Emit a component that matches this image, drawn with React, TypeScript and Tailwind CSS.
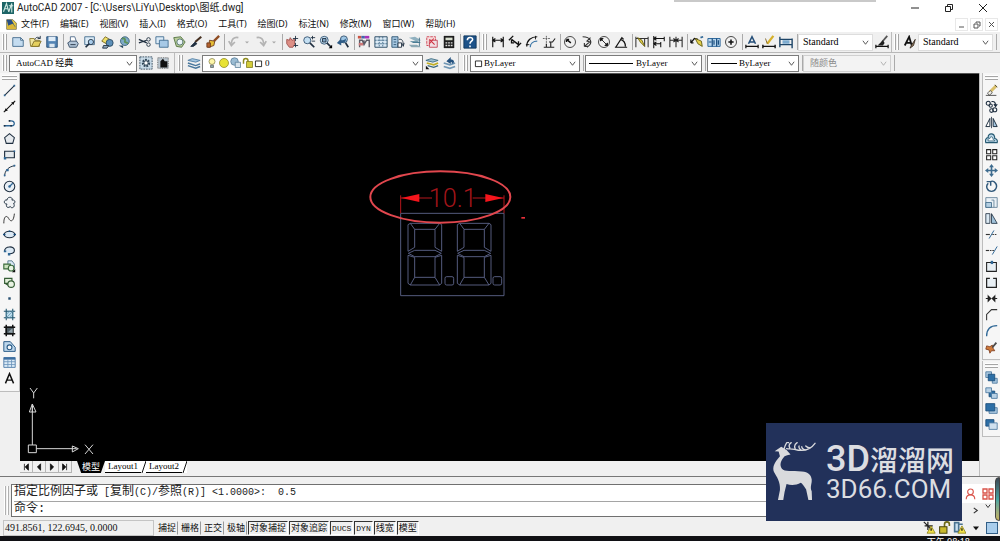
import type { ReactNode } from 'react'

const INK = '#1f2f40'
const BLUE = '#2f6796'
const PALE = '#c9dff0'
const GOLD = '#e3d04a'

// All glyphs are drawn on a 16 x 16 grid
const glyphs: Record<string, ReactNode> = {
  new: <path d="M2 3h9l3 3v7H2z M11 3v3h3" fill="#c4dcf0" stroke="#41698c" />,
  open: <><path d="M2 4h5l1 2h5v7H3z" fill="#f1e6a0" stroke="#8c7a2d" /><path d="M4 13l3-6h8l-3 6z" fill="#e6d05e" stroke="#7a6a24" /><path d="M8 5c1-3 4-3 6-1M14 1v3h-3" stroke={INK} /></>,
  save: <><path d="M2 2h12v12H2z" fill="#5384b4" stroke="#234a72" /><path d="M4 2h8v5H4z" fill="#e0edf8" /><path d="M5 10h6v4H5z" fill="#dce7f0" /></>,
  print: <><path d="M5 8V2h5l2 6" fill="#fff" stroke="#4d6888" /><path d="M2 9l3-2h7l2 3-2 4H4z" fill="#b2c5d8" stroke="#31475f" /><path d="M5 11h6" stroke={INK} /></>,
  preview: <><path d="M2 2h11v9H2z" fill="#dcecf8" stroke="#41698c" /><circle cx="9" cy="8" r="3" fill="#a8cceb" stroke={INK} /><path d="M7 10l-4 4" stroke={INK} strokeWidth="2" /></>,
  publish: <><path d="M2 7l4-5 5 3-2 6z" fill="#f0e06a" stroke="#77671e" /><circle cx="11" cy="9" r="4" fill="#5d8fb8" stroke="#27475e" /><path d="M4 12h6l-2 3H3z" fill="#92a9bd" stroke={INK} /></>,
  globe: <><circle cx="9" cy="7" r="5" fill="#7da9c6" stroke="#37607a" /><path d="M6 5c2-3 4 0 3 2s3 1 3 3" stroke="#5c9256" strokeWidth="2" /><path d="M2 12h5v3z" fill="#27475e" /></>,
  cut: <><path d="M1 5l9 4M1 9l9-3" stroke={INK} strokeWidth="1.5" /><circle cx="12" cy="11" r="2" stroke={INK} /><circle cx="12" cy="5" r="2" stroke={INK} /></>,
  copy: <><path d="M1 2h9v8H1z" fill="#dcebf7" stroke="#406d91" /><path d="M5 6h10v8H5z" fill="#a7c9e6" stroke="#406d91" /></>,
  paste: <><path d="M2 3l8-1 5 6-4 6-6-1z" fill="#b9cc9a" stroke="#4e6f3c" /><circle cx="9" cy="8" r="3.5" fill="#eaf3f8" stroke="#4e6f6c" /></>,
  brush: <><path d="M14 2L7 8" stroke="#463021" strokeWidth="2.4" /><path d="M7 8l-5 5 3 0 4-3z" fill={INK} stroke={INK} /></>,
  block: <><path d="M15 1L9 7" stroke="#8f4c22" strokeWidth="2.6" /><path d="M4 6l6 1-1 5-6 2z" fill="#e5bd35" stroke="#6c3a1e" /><path d="M1 9h4v5H1z" fill="#b5622e" stroke="#6c3a1e" /></>,
  undo: <path d="M13 3C8 2 5 5 5 10M2 7l3 5 4-4" stroke="#b3b3b3" strokeWidth="2" />,
  redo: <path d="M3 3c5-1 8 2 8 7M14 7l-3 5-4-4" stroke="#b3b3b3" strokeWidth="2" />,
  caret: <path d="M4 7h8l-4 4z" fill="#a8a8a8" />,
  pan: <><path d="M2 5l3 1 1-3 2 3 3-1v6l-2 3H5L2 10z" fill="#dd8f86" stroke="#9d4f4c" /><path d="M12 1v6M9 4h6M12 9v5M10 12h5" stroke={INK} /></>,
  zoom: <><circle cx="6" cy="6" r="4" fill="#c4dff2" stroke="#31506e" /><path d="M9 9l5 5" stroke={INK} strokeWidth="2" /><path d="M12 1v4M10 3h5M11 7h4" stroke={INK} /></>,
  zoomWin: <><circle cx="6" cy="6" r="4.5" fill="#c4dff2" stroke="#31506e" /><path d="M4 4h4v4H4z" fill="#7fa4c3" stroke={INK} /><path d="M9 9l5 5" stroke={INK} strokeWidth="2" /><path d="M15 11v4h-4z" fill="#000" /></>,
  zoomPrev: <><circle cx="9" cy="5" r="4" fill="#9ec6e4" stroke="#31506e" /><path d="M11 9l3 5" stroke={INK} strokeWidth="2" /><path d="M1 9l5 3V9c4 0 6-2 5-5-1 2-3 2-5 2V4z" fill="#2f5c86" /></>,
  props: <><path d="M1 1h4v3H1z" fill="#c54" /><path d="M5 1h4v3H5z" fill="#46a" /><path d="M9 1h5v3H9z" fill="#a3b" /><path d="M3 14V6h3l2 5 3-5h3v8M8 6v5" stroke="#5b5b66" strokeWidth="1.6" /><path d="M2 9h5v3H2z" fill="#c77" /></>,
  center: <><path d="M1 2h14v12H1z" fill="#dbeaf5" stroke="#20435e" /><path d="M6 2v12M1 6h14M1 10h14M10 2v12" stroke="#3d6786" strokeDasharray="2 1" /></>,
  palette: <><path d="M1 2h7v12H1z" fill="#a7c8e2" stroke="#27506f" /><path d="M3 5h3M3 8h3M3 11h3" stroke="#27506f" /><path d="M9 5c4-1 5 2 5 7M12 9l2 4 1-4" stroke={INK} /><path d="M8 9h4v5H8z" fill="#fff" stroke={INK} /></>,
  sheets: <><path d="M1 3l7-1 7 4-6 1z" fill="#8fb0bf" /><path d="M2 7h9l4 2H6z" fill="#497c94" /><path d="M1 11h9l5 3H4z" fill="#8ba8b4" /><path d="M13 3v10" stroke="#3d6a80" /></>,
  markup: <><path d="M2 2h10v10H2z" fill="#f6dede" stroke="#cf3d4d" strokeDasharray="3 1" /><path d="M5 6h9v8H5z" fill="#f0dfe4" stroke="#c04455" /><path d="M5 5l6 6M10 4l-5 6" stroke="#d02f3f" strokeWidth="1.2" /></>,
  calc: <><path d="M2 1h12v14H2z" fill="#1e1e1e" /><path d="M4 3h8v3H4z" fill="#d8dfcf" /><path d="M4 9h8M4 12h8" stroke="#ddd" strokeWidth="1.6" strokeDasharray="2 1" /></>,
  help: <><path d="M1 1h14v14H1z" fill="#1d5289" stroke="#0e3358" /><path d="M5 6c0-4 6-4 6-1 0 2-3 2-3 5M8 12v2" stroke="#fff" strokeWidth="1.8" /></>,
  dimLinear: <path d="M2 2v12M14 2v12M2 6h12M5 4L2 6l3 2M11 4l3 2-3 2" stroke="#111" strokeWidth="1.3" />,
  dimAligned: <path d="M4 5l8 6M1 6l5-5M10 14l5-5M4 5v4h3M12 11V7" stroke="#111" strokeWidth="1.5" />,
  dimArc: <><path d="M2 13C2 6 7 2 14 2" stroke="#111" strokeWidth="1.4" /><path d="M6 14c0-4 3-7 8-7" stroke="#3f78a8" strokeWidth="1.4" /><path d="M1 11h4M12 1v4" stroke="#111" /></>,
  dimOrd: <><path d="M5 1v10M1 4h9" stroke="#555" strokeDasharray="2 1" /><path d="M2 14h12M5 10v4M10 8v6M8 8h4l3-4" stroke="#222" strokeWidth="1.300" /></>,
  dimRadius: <><circle cx="8" cy="8" r="6.3" stroke="#333" /><path d="M9 9L4 5M4 5v3M4 5h3" stroke="#111" strokeWidth="1.6" /></>,
  dimJog: <path d="M3 2c9 0 13 7 5 12M12 3L8 7l3 1-6 5M5 13V9M5 13h4" stroke="#333" strokeWidth="1.3" />,
  dimDia: <><circle cx="8" cy="8" r="6.3" stroke="#333" /><path d="M4 4l8 8M4 4v3l3-3zM12 12V9l-3 3z" stroke="#111" fill="#111" /></>,
  dimAngle: <path d="M1 14h14M2 14L9 3l2 2M7 5c4 1 6 4 6 8" stroke="#111" strokeWidth="1.4" />,
  dimQuick: <><path d="M1 2v12M15 2v12M1 4h14M11 4v9" stroke="#333" strokeWidth="1.2" /><path d="M3 3l5 3 3 7-5-5z" fill={GOLD} stroke="#6b6112" /></>,
  dimBase: <path d="M2 1v14M2 4h12M2 10h8M10 8v6M5 2L2 4l3 2M5 8l-3 2 3 2M14 2v5" stroke="#111" strokeWidth="1.2" />,
  dimCont: <path d="M1 2v12M8 2v12M15 2v12M1 6h14M5 4l3 2-3 2M11 4L8 6l3 2" stroke="#222" strokeWidth="1.2" />,
  leader: <><path d="M1 9l4-5 4 1M1 9V5M1 9h3" stroke="#111" strokeWidth="1.4" /><path d="M6 4l7 3 1 6-5-3z" fill={GOLD} stroke="#5e570f" /><path d="M12 3l3-1" stroke={BLUE} strokeWidth="2" /></>,
  tolerance: <><path d="M1 4h14v9H1z" fill="#b8d6ee" stroke="#1c5b93" /><path d="M6 4v9M11 4v9M2 8h3M13 6v5M8 6v5" stroke="#1c4f80" strokeWidth="1.4" /></>,
  centerMark: <><circle cx="8" cy="8" r="6.3" stroke="#333" /><path d="M8 5v6M5 8h6" stroke="#111" strokeWidth="1.8" /></>,
  dimEdit: <><path d="M4 10l4-8 4 8M5 8h6" stroke="#244e78" strokeWidth="1.8" /><path d="M1 13h14M1 11v4M15 11v4" stroke="#111" strokeWidth="1.4" /></>,
  dimText: <><path d="M1 13h14M1 11v4M15 11v4" stroke="#111" strokeWidth="1.6" /><path d="M13 1L6 10" stroke="#d5b02b" strokeWidth="2.6" /><path d="M4 4l2 6" stroke="#7b5d1a" /></>,
  dimUpdate: <><path d="M1 2v12M15 4v11M1 5h14M1 11h14" stroke="#1d4568" strokeWidth="1.6" /><path d="M4 6h8v4H4z" fill="#7eacd0" /></>,
  dimStyle: <><path d="M1 13h14M1 11v4M15 11v4" stroke="#111" strokeWidth="1.4" /><path d="M14 1L8 8" stroke="#555" strokeWidth="2" /><path d="M9 6l-6 6h6l2-3z" fill="#222" /></>,
  textStyle: <><path d="M2 12L7 2l3 10M4 9h5" stroke="#111" strokeWidth="2" /><path d="M14 5l-4 6-2 4 4-3z" fill="#8a765c" stroke="#3b3025" /></>,
  gear: <><path d="M1 1h14v14H1z" fill="#c9dbe8" stroke="#2f4658" strokeDasharray="2 1" /><circle cx="8" cy="8" r="3.5" fill="#fff" stroke="#2f4658" strokeWidth="2.500" strokeDasharray="2 1" /><circle cx="8" cy="8" r="2.500" stroke="#2f4658" /></>,
  workspace: <><path d="M2 2h12v12H2z" fill="#b9c5ce" stroke="#555" strokeDasharray="1 1" /><path d="M5 6l3-3 2 3h3v7H5z" fill="#111" /></>,
  layers: <><path d="M1 5l5-2 9 2-5 2z" fill="#a5c6e0" stroke="#4d7ba1" /><path d="M1 8l9 3 5-2M1 11l9 3 5-2" stroke="#47769c" strokeWidth="1.6" /></>,
  layerState: <><path d="M1 5l6-2 8 2-6 2z" fill="#9dbfd0" stroke="#3c6a80" /><path d="M2 8l8 2 5-2" stroke="#c0ae24" strokeWidth="2" /><path d="M3 11l7 2 5-2" stroke="#3c6a80" strokeWidth="1.6" /><path d="M1 11v4h4z" fill="#111" /></>,
  layerPrev: <><path d="M2 8l7 2 6-2M2 12l7 2 6-2" stroke="#7197b4" strokeWidth="2" /><path d="M5 6l5-5v3c4 0 5 3 2 5 0-2-1-2-2-2v2z" fill="#24517e" /></>,
  bulb: <><circle cx="8" cy="6" r="4" fill="#fdf6a8" stroke="#86804a" /><path d="M6 11h4v3H6z" fill="#8aa" stroke="#666" /></>,
  sun: <circle cx="8" cy="8" r="6" fill="#e8e234" stroke="#8d8826" />,
  freeze: <><circle cx="6" cy="6" r="5" fill="#9bbcd3" stroke="#557b96" /><path d="M7 7h7v7H7z" fill="#d5e2eb" stroke="#557b96" /></>,
  lock: <><path d="M2 9V5c0-4 6-4 6 0v2" stroke="#8e8b1f" strokeWidth="2" /><path d="M6 6h8v8H6z" fill="#d3cc3a" stroke="#7c781a" /></>,
  swatch: <path d="M2.500 3.500h11v10h-11z" fill="#fff" stroke="#111" strokeWidth="1.5" />,

  line: <><path d="M2 14L14 2" stroke={INK} strokeWidth="1.3" /><path d="M1 13h2v2H1zM13 1h2v2h-2z" fill={BLUE} /></>,
  xline: <><path d="M1 15L15 1" stroke="#111" strokeWidth="1.3" /><path d="M2 14l1-4 3 3zM14 2l-1 4-3-3z" fill="#111" /></>,
  pline: <><path d="M1 12h10c4 0 4-6-1-6H8" stroke={BLUE} strokeWidth="1.6" /><path d="M1 11h2v2H1zM9 11h2v2H9zM7 5h2v2H7z" fill={INK} /></>,
  polygon: <path d="M8 2l6 5-2 7H4L2 7z" fill="#e6eaee" stroke={INK} strokeWidth="1.3" />,
  rect: <><path d="M2 4h12v8H2z" fill="#e4e9ed" stroke={INK} strokeWidth="1.4" /><path d="M1 11h3v3H1zM13 3h2v2h-2z" fill={BLUE} /></>,
  arc: <><path d="M2 15C2 8 7 3 15 2" stroke={INK} strokeWidth="1.2" /><path d="M1 13h2v2H1zM4 6h3v3H4zM13 1h2v2h-2z" fill={BLUE} /></>,
  circle: <><circle cx="8" cy="8" r="6.500" fill="#e8eff5" stroke={INK} strokeWidth="1.3" /><path d="M8 8l4-4" stroke={BLUE} strokeWidth="1.5" /><circle cx="8" cy="8" r="1.5" fill={BLUE} /></>,
  cloud: <path d="M5 10c-5 0-4-6 0-5 0-5 8-4 6 0 4-1 5 4 2 4 3 5-3 7-4 4-4 3-6-1-4-3z" fill="#f1f3f5" stroke={INK} strokeWidth="1.2" />,
  spline: <path d="M1 14C1 4 5 4 7 8s6 5 7-6" stroke="#333" strokeWidth="1.2" />,
  ellipse: <><ellipse cx="8" cy="8" rx="6.500" ry="4" fill="#dce9f4" stroke={INK} strokeWidth="1.4" /><path d="M0 7h3v2H0zM13 7h3v2h-3zM7 3h2v2H7z" fill="#154a7c" /></>,
  ellipseArc: <><path d="M2 9C1 2 15 2 14 8c0 4-4 4-6 4" stroke={INK} strokeWidth="1.4" fill="#dce9f4" /><path d="M1 8h3v2H1zM6 11h3v3H6z" fill={BLUE} /></>,
  insert: <><path d="M6 1h5l3 4v6H6z" fill="#d9e9f5" stroke="#466a80" /><path d="M1 5h8v6H1z" fill="#cbe2bf" stroke="#3b6b3c" strokeWidth="1.4" /><circle cx="10" cy="10" r="3.500" fill="#e9f3e3" stroke="#3b6b3c" strokeWidth="1.4" /><path d="M15 11v4h-4z" fill="#111" /></>,
  makeBlock: <><path d="M2 3h9v6H2z" fill="#e2efda" stroke="#355d35" strokeWidth="1.4" /><circle cx="10" cy="10" r="4" fill="#e9f3e3" stroke="#355d35" strokeWidth="1.4" /><path d="M1 9h5v3z" fill="#355d35" /></>,
  point: <path d="M6.500 6.500h3v3h-3z" fill="#285072" />,
  hatch: <><path d="M3 3h10v10H3z" fill="#bcdcec" /><path d="M1 4h14M1 12h14M4 1v14M12 1v14" stroke="#23566e" strokeWidth="1.3" /><path d="M4 12l8-8M4 8l4-4M8 12l4-4" stroke="#6da0ba" /></>,
  gradient: <><path d="M3 3h10v10H3z" fill="#4c5a61" /><path d="M1 4h14M1 12h14M4 1v14M12 1v14" stroke="#111" strokeWidth="1.8" /><path d="M6 10l6-5v6z" fill="#93a2aa" /></>,
  region: <><path d="M1 14V2h8l6 7v5z" fill="#bdd7ec" stroke="#2b5c87" strokeWidth="1.2" /><circle cx="8" cy="9" r="3" fill="#f4f8fb" stroke="#2b5c87" strokeWidth="1.4" /></>,
  table: <><path d="M1 2h14v12H1z" fill="#dcebf7" stroke="#3d6fa0" /><path d="M1 3h14" stroke="#3d6fa0" strokeWidth="3" /><path d="M1 7h14M1 10.500h14M6 4v10M10.500 4v10" stroke="#6993ba" /></>,
  mtext: <path d="M3 14L8 2l5 12M5 10h6" stroke="#111" strokeWidth="1.8" />,

  erase: <><path d="M14 2L6 10" stroke="#d9bf6a" strokeWidth="3.500" /><path d="M7 8l-4 3 2 3 4-3z" fill="#f0eee6" stroke="#555" /><path d="M1 14h13M12 1l3 3" stroke="#333" /></>,
  dup: <><circle cx="4" cy="4" r="2.500" stroke={INK} strokeWidth="1.300" /><circle cx="7" cy="7" r="2" stroke={INK} strokeWidth="1.300" /><circle cx="8" cy="13" r="2.200" stroke={INK} strokeWidth="1.300" /><circle cx="12" cy="12" r="2.500" stroke={INK} strokeWidth="1.300" /><path d="M8 2c4-1 5 2 5 5M11 5l2 3 2-3" stroke={INK} strokeWidth="1.4" /></>,
  mirror: <><path d="M6 3v10H1z" fill="#fff" stroke={INK} strokeWidth="1.2" /><path d="M10 3v10h5z" fill="#a5c8e2" stroke={INK} strokeWidth="1.2" /><path d="M8 1v14" stroke={INK} /></>,
  offset: <><path d="M1 13h14c1-4-2-5-3-5 0-8-9-7-8-1-3 0-4 3-3 6z" fill="#bcd7e8" stroke="#275a72" strokeWidth="1.4" /><path d="M4 11h8c0-2-2-1-2-2 0-4-4-4-4-1-2 0-3 1-2 3z" fill="#fff" stroke="#275a72" /></>,
  array: <path d="M2 2h5v5H2zM9.500 2h5v5h-5zM2 9.500h5v5H2zM9.500 9.500h5v5h-5z" fill="#fff" stroke="#222" strokeWidth="1.300" />,
  move: <path d="M8 0l3 4H9v3h3V5l4 3-4 3V9H9v3h2l-3 4-3-4h2V9H4v2L0 8l4-3v2h3V4H5z" fill="#3d6b8e" />,
  rotate: <path d="M4 4c-4 4-1 10 4 10s8-6 5-10-6-2-6-2M2 2h5v5" stroke="#31597b" strokeWidth="1.800" />,
  scale: <><path d="M1 2h14v12H1z" fill="#eaf1f6" stroke="#5b7b92" /><path d="M1 8h7v6H1z" fill="#b4cfe2" stroke="#3c6786" /><path d="M8 5h3v9" stroke="#5b7b92" /></>,
  stretch: <><path d="M1 2h5v12H1z" fill="#dbe9f3" stroke={INK} /><path d="M8 2l7 12H8z" fill="#9fc1d9" stroke={INK} /></>,
  trim: <><path d="M1 8h5" stroke="#333" strokeWidth="1.4" /><path d="M9 8h6" stroke="#333" strokeWidth="1.2" strokeDasharray="2 1" /><path d="M5 13l6-10" stroke={BLUE} strokeWidth="1.2" /></>,
  extend: <><path d="M1 8h4" stroke="#333" strokeWidth="1.4" /><path d="M6 8h5" stroke="#333" strokeWidth="1.2" strokeDasharray="2 1" /><path d="M9 13l6-10" stroke={BLUE} strokeWidth="1.2" /></>,
  breakPt: <><path d="M2 3h12v11H2z" fill="#e8eff4" stroke="#222" strokeWidth="1.300" /><path d="M7 1h3v4H7z" fill={BLUE} /></>,
  breakGap: <path d="M6 3H2v11h12V3h-4" fill="#e8eff4" stroke="#222" strokeWidth="1.500" />,
  join: <path d="M1 8h4M11 8h4M4 5l3 3-3 3zM12 5L9 8l3 3z" stroke="#222" fill="#222" strokeWidth="1.500" />,
  chamfer: <path d="M2 15V8l6-6h7" stroke="#333" strokeWidth="1.300" />,
  fillet: <path d="M2 15C2 6 6 2 15 2" stroke={BLUE} strokeWidth="1.600" />,
  explode: <><path d="M2 6l4 1 3-2 1 4 2 3-4 0-2 3-1-4-4-1z" fill="#cf7a3a" stroke="#7b3a1c" /><path d="M14 2L9 8" stroke="#4b4b4b" strokeWidth="2.200" /></>,
  front: <><path d="M1 1h7v7H1zM9 9h6v6H9z" fill="#a9c7df" stroke="#47759c" /><path d="M4 4h8v8H4z" fill="#2d6fa6" stroke="#184a77" /></>,
  back: <><path d="M5 5h7v7H5z" fill="#2d6fa6" stroke="#184a77" /><path d="M1 1h7v6H1zM8 8h7v6H8z" fill="#b8d1e5" stroke="#47759c" /></>,
  above: <><path d="M5 7h10v7H5z" fill="#a9c7df" stroke="#47759c" /><path d="M1 2h11v9H1z" fill="#2d6fa6" stroke="#184a77" /></>,
  under: <><path d="M1 2h10v8H1z" fill="#2d6fa6" stroke="#184a77" /><path d="M5 6h10v8H5z" fill="#cfe0ee" stroke="#47759c" /></>,
}

type Entry = [name: string, label: string]

const standardTools: Entry[][] = [
  [['new', 'New'], ['open', 'Open'], ['save', 'Save']],
  [['print', 'Plot'], ['preview', 'Plot preview'], ['publish', 'Publish'], ['globe', '3D DWF']],
  [['cut', 'Cut'], ['copy', 'Copy'], ['paste', 'Paste'], ['brush', 'Match properties'], ['block', 'Block editor']],
  [['undo', 'Undo'], ['caret', 'Undo list'], ['redo', 'Redo'], ['caret', 'Redo list']],
  [['pan', 'Pan'], ['zoom', 'Zoom realtime'], ['zoomWin', 'Zoom window'], ['zoomPrev', 'Zoom previous']],
  [['props', 'Properties'], ['center', 'Design center'], ['palette', 'Tool palettes'], ['sheets', 'Sheet set'], ['markup', 'Markup'], ['calc', 'Calculator']],
  [['help', 'Help']],
]

const dimensionTools: Entry[][] = [
  [['dimLinear', 'Linear'], ['dimAligned', 'Aligned'], ['dimArc', 'Arc length'], ['dimOrd', 'Ordinate']],
  [['dimRadius', 'Radius'], ['dimJog', 'Jogged'], ['dimDia', 'Diameter'], ['dimAngle', 'Angular']],
  [['dimQuick', 'Quick dimension'], ['dimBase', 'Baseline'], ['dimCont', 'Continue']],
  [['leader', 'Leader'], ['tolerance', 'Tolerance'], ['centerMark', 'Center mark']],
  [['dimEdit', 'Dimension edit'], ['dimText', 'Text edit'], ['dimUpdate', 'Update']],
]

const drawTools = ['line', 'xline', 'pline', 'polygon', 'rect', 'arc', 'circle', 'cloud', 'spline', 'ellipse', 'ellipseArc', 'insert', 'makeBlock', 'point', 'hatch', 'gradient', 'region', 'table', 'mtext']
const modifyTools = ['erase', 'dup', 'mirror', 'offset', 'array', 'move', 'rotate', 'scale', 'stretch', 'trim', 'extend', 'breakPt', 'breakGap', 'join', 'chamfer', 'fillet', 'explode']
const orderTools = ['front', 'back', 'above', 'under']

const menus = ['文件(F)', '编辑(E)', '视图(V)', '插入(I)', '格式(O)', '工具(T)', '绘图(D)', '标注(N)', '修改(M)', '窗口(W)', '帮助(H)']
const toggles = [
  { label: '捕捉', on: false },
  { label: '栅格', on: false },
  { label: '正交', on: false },
  { label: '极轴', on: false },
  { label: '对象捕捉', on: true },
  { label: '对象追踪', on: true },
  { label: 'DUCS', on: true, latin: true },
  { label: 'DYN', on: true, latin: true },
  { label: '线宽', on: true },
  { label: '模型', on: true },
]

function Glyph({ name, className = 'size-[14px]' }: { name: string; className?: string }) {
  return (
    <svg viewBox="0 0 16 16" fill="none" className={`shrink-0 ${className}`} aria-hidden="true">
      {glyphs[name]}
    </svg>
  )
}

function Tool({ name, label }: { name: string; label: string }) {
  return (
    <button
      aria-label={label}
      className={`flex h-4 shrink-0 items-center justify-center ${name === 'caret' ? 'w-[10px]' : 'w-[17px]'}`}
    >
      <Glyph name={name} className={name === 'caret' ? 'size-2' : 'size-[14px]'} />
    </button>
  )
}

function Sep() {
  return <div className="h-4 w-1 shrink-0 border-r border-[#aaaaaa]" />
}

function Grip() {
  return (
    <div className="mx-[2px] flex h-4 shrink-0 gap-[1px]">
      <div className="w-[2px] border-r border-[#a5a5a5] bg-white" />
      <div className="w-[2px] border-r border-[#a5a5a5] bg-white" />
    </div>
  )
}

function SideGrip() {
  return (
    <div className="mx-[2px] flex flex-col gap-[1px] py-[2px]">
      <div className="h-[2px] border-b border-[#a5a5a5] bg-white" />
      <div className="h-[2px] border-b border-[#a5a5a5] bg-white" />
    </div>
  )
}

function Groups({ groups }: { groups: Entry[][] }) {
  return groups.map((group, g) => (
    <div key={g} className="flex shrink-0 items-center">
      {g > 0 && <Sep />}
      {group.map(([name, label], i) => (
        <Tool key={i} name={name} label={label} />
      ))}
    </div>
  ))
}

interface DropProps {
  label: string
  value: string
  width: string
  pad?: string
  size?: string
  frame?: string
  disabled?: boolean
  children?: ReactNode
}

function Drop({ label, value, width, pad = 'pl-1', size = 'text-[9px]', frame = 'border-[#7b7b7b]', disabled, children }: DropProps) {
  return (
    <div className={`relative shrink-0 ${width}`}>
      <select
        aria-label={label}
        disabled={disabled}
        className={`block h-[17px] w-full appearance-none border ${frame} ${pad} ${size} font-['Liberation_Serif','Noto_Sans_CJK_SC',serif] leading-[14px] ${disabled ? 'bg-[#f3f3f3] text-[#8a8a8a]' : 'bg-white text-black'}`}
      >
        <option>{value}</option>
      </select>
      <div className="pointer-events-none absolute inset-y-0 left-1 flex items-center">{children}</div>
      <svg viewBox="0 0 8 8" fill="none" className="pointer-events-none absolute top-[5px] right-1 size-[7px]">
        <path d="M1 2l3 4 3-4" stroke={disabled ? '#aaa' : '#444'} />
      </svg>
    </div>
  )
}

function SideBar({ names }: { names: string[] }) {
  return names.map((name) => (
    <button key={name} aria-label={name} className="flex min-h-0 flex-1 items-center justify-center">
      <Glyph name={name} className="size-[13px]" />
    </button>
  ))
}

function Digit({ x }: { x: number }) {
  return (
    <g transform={`translate(${x} 0)`}>
      <path d="M8 190h88l-14 18H21zM96 190l6 4v80l-20-12v-54M8 190l-7 4v80l20-12v-54" />
      <path d="M2 280l19-9h61l19 9-19 10H21z" />
      <path d="M1 286v84l7 5 13-23v-60zM102 286v84l-6 5-14-23v-60zM21 352h61M8 375h88" />
    </g>
  )
}

function Drawing() {
  return (
    <svg viewBox="0 0 540 435" fill="none" className="absolute top-[86px] left-[340px] w-[180px]">
      <g stroke="#656d96" strokeWidth="2.500">
        <path d="M122 160h310v247H122z" />
        <Digit x={143} />
        <Digit x={291} />
        <rect x="255" y="350" width="26" height="25" rx="5" />
        <rect x="399" y="350" width="26" height="25" rx="5" />
      </g>
      <g stroke="#b5161c" strokeWidth="3">
        <path d="M122 106v54M432 106v54M122 114h94M338 114h94" />
        <path d="M124 114l54-12v24zM430 114l-54-12v24z" fill="#f5151c" stroke="none" />
      </g>
      <text x="206" y="142" fontSize="76" fontWeight="300" fill="#a3151a" fontFamily="Roboto, sans-serif">
        10.1
      </text>
      <ellipse cx="241" cy="111" rx="210" ry="77" stroke="#e2474e" strokeWidth="6" />
      <path d="M484 171h11v5h-11z" fill="#e8303a" />
    </svg>
  )
}

function UcsIcon() {
  return (
    <svg viewBox="0 0 240 220" fill="none" stroke="#d8d8d8" strokeWidth="3" className="absolute bottom-0 left-1 w-[80px]">
      <path d="M13 171h24v23H13zM25 171V48M37 182h121" />
      <path d="M25 48l-9 24h20zM25 54v18M163 182l-18-8v18z" />
      <path d="M18 0l11 15L40 0M29 15v16M183 170l24 28M207 170l-24 28" />
    </svg>
  )
}

function Deer() {
  return (
    <svg viewBox="0 0 136 184" fill="#d9dadd" className="w-[45px] shrink-0">
      <path d="M8 28L28 14l16 10 12 14-10 2-8 3c-12 14-16 26-8 38 8 10 30 5 60 8 20 2 28 10 30 24 1 14-6 22 0 36l1 26h-11l-7-32c-8-12-10-16-16-20-14 8-30 8-43 4l-6 24-4 24H18l6-30c2-24-10-40-18-54-6-16 2-30 18-48l-4-14z" />
      <path
        d="M36 22C42 4 46-2 50 2M44 20c6 2 14 0 24 2 26 8 46 4 62-18M54 18c-4-6-2-12 4-16M70 20c-4-8 0-14 6-18M88 24c-6-4-8-8-6-12M102 24c-8-2-12-6-12-10M116 18c-8 0-12-4-14-6"
        fill="none"
        stroke="#d9dadd"
        strokeWidth="4"
        strokeLinecap="round"
      />
    </svg>
  )
}

function Brand() {
  return (
    <div className="absolute right-[38px] bottom-5 flex h-[98px] w-[196px] items-center bg-[#22315a] pl-[6px] text-[#dcdde1]">
      <Deer />
      <div className="ml-[9px] flex flex-col">
        <div className="flex items-center leading-[34px] whitespace-nowrap">
          <span className="font-['Roboto',sans-serif] text-[36px] font-medium">3D</span>
          <span className="font-['Noto_Sans_CJK_SC',sans-serif] text-[28px] font-medium">溜溜网</span>
        </div>
        <span className="font-['Roboto',sans-serif] text-[26px] leading-[26px]">3D66.COM</span>
      </div>
    </div>
  )
}

function TitleBar() {
  return (
    <header className="flex h-4 items-center bg-white pr-3 pl-[2px]">
      <svg viewBox="0 0 16 16" fill="none" className="size-[12px]">
        <path d="M0 0h16v16H0z" fill="#1d6567" />
        <path d="M2 13L6 2l3 11M4 9h4M9 13l4-11v12M9 5h6" stroke="#cfe8e2" strokeWidth="1.5" />
      </svg>
      <h1 className="ml-[3px] font-['Roboto','Noto_Sans_CJK_SC',sans-serif] text-[10px] leading-4 text-[#222222]">
        AutoCAD 2007 - [C:\Users\LiYu\Desktop\图纸.dwg]
      </h1>
      <div className="ml-auto flex items-center gap-6">
        <button aria-label="Minimize"><svg viewBox="0 0 10 10" className="size-[10px]" stroke="#222"><path d="M1 5h8" /></svg></button>
        <button aria-label="Restore"><svg viewBox="0 0 10 10" fill="none" className="size-[10px]" stroke="#222"><path d="M1.500 3.500h5v5h-5zM3.500 3V1.500h5v5H7" /></svg></button>
        <button aria-label="Close"><svg viewBox="0 0 10 10" className="size-[10px]" stroke="#222"><path d="M1 1l8 8M9 1L1 9" /></svg></button>
      </div>
    </header>
  )
}

function MenuBar() {
  return (
    <nav className="flex h-4 items-center bg-white pr-[2px] pl-[6px]">
      <svg viewBox="0 0 16 16" className="size-[11px]">
        <path d="M1 1h9l5 5v9H1z" fill="#e9cd44" stroke="#5b5532" />
        <path d="M1 1h7l6 11H4z" fill="#264f86" />
        <path d="M4 9l6-2 5 7H1z" fill="#d9b739" />
      </svg>
      <div className="ml-1 flex gap-[11px] font-['Noto_Sans','Noto_Sans_CJK_SC',sans-serif] text-[9px] leading-4 whitespace-nowrap text-[#111111]">
        {menus.map((m) => (
          <button key={m}>{m}</button>
        ))}
      </div>
      <div className="ml-auto flex gap-[2px]">
        {['M2 7h5', 'M2 4h4v4H2zM4 3V2h4v4H7', 'M2 2l5 5M7 2L2 7'].map((d) => (
          <button key={d} aria-label="Document window" className="flex size-[13px] items-center justify-center border border-[#e8e8e8]">
            <svg viewBox="0 0 9 9" fill="none" stroke="#555" className="size-[9px]"><path d={d} /></svg>
          </button>
        ))}
      </div>
    </nav>
  )
}

function Toolbars() {
  return (
    <>
      <div className="flex h-[21px] items-center border-b border-[#b8b8b8]">
        <Grip />
        <Groups groups={standardTools} />
        <div className="h-5 w-[2px] border-r border-[#bcbcbc]" />
        <Grip />
        <Groups groups={dimensionTools} />
        <Sep />
        <Drop label="Dimension style" value="Standard" width="w-[75px]" size="text-[10px]" frame="border-[#dddddd]" />
        <Tool name="dimStyle" label="Dimension style" />
        <div className="h-5 w-[2px] border-r border-[#bcbcbc]" />
        <Grip />
        <Tool name="textStyle" label="Text style" />
        <Drop label="Text style name" value="Standard" width="w-[75px]" size="text-[10px]" frame="border-[#dddddd]" />
        <Sep />
      </div>
      <div className="flex h-5 items-center">
        <Grip />
        <Drop label="Workspace" value="AutoCAD 经典" width="w-[128px]" pad="pl-[6px]" />
        <Tool name="gear" label="Workspace settings" />
        <Tool name="workspace" label="My workspace" />
        <div className="mr-px h-5 w-1 border-r border-[#bcbcbc]" />
        <Grip />
        <Tool name="layers" label="Layer properties" />
        <Drop label="Layer" value="0" width="w-[221px]" pad="pl-[62px]">
          {['bulb', 'sun', 'freeze', 'lock'].map((n) => (
            <Glyph key={n} name={n} className="size-[12px]" />
          ))}
          <Glyph name="swatch" className="size-[9px]" />
        </Drop>
        <Tool name="layerState" label="Make object's layer current" />
        <Tool name="layerPrev" label="Layer previous" />
        <div className="mr-[2px] h-5 w-[2px] border-r border-[#bcbcbc]" />
        <Grip />
        <Drop label="Color" value="ByLayer" width="w-[110px]" pad="pl-[13px]">
          <Glyph name="swatch" className="size-[9px]" />
        </Drop>
        <div className="mr-px"><Sep /></div>
        <Drop label="Linetype" value="ByLayer" width="w-[117px]" pad="pl-[50px]">
          <div className="h-px w-[44px] bg-black" />
        </Drop>
        <div className="mr-px"><Sep /></div>
        <Drop label="Lineweight" value="ByLayer" width="w-[92px]" pad="pl-[31px]">
          <div className="h-px w-[26px] bg-black" />
        </Drop>
        <Sep />
        <Drop label="Plot style" value="随颜色" width="w-[88px]" pad="pl-[6px]" frame="border-[#d0d0d0]" disabled />
        <Sep />
      </div>
    </>
  )
}

function LayoutTabs() {
  return (
    <div className="flex h-[15px] items-start">
      {['M3 1v8M8 1v8L4 5z', 'M7 1v8L3 5z', 'M3 1v8l4-4z', 'M7 1v8M2 1v8l4-4z'].map((d) => (
        <button key={d} aria-label="Scroll tabs" className="flex h-3 w-[13px] items-center justify-center border-r border-b border-[#b5b5b5]">
          <svg viewBox="0 0 10 10" className="size-[8px]" fill="#111" stroke="#111"><path d={d} /></svg>
        </button>
      ))}
      <div className="ml-[5px] flex font-['Liberation_Serif','Noto_Sans_CJK_SC',serif] text-[9px] leading-[11px]">
        <button className="h-3 bg-black px-[5px] text-white [clip-path:polygon(0_0,100%_0,85%_100%,15%_100%)]">模型</button>
        {['Layout1', 'Layout2'].map((t) => (
          <button key={t} className="flex h-3 bg-white">
            <span className="border-b border-black px-[3px]">{t}</span>
            <svg viewBox="0 0 5 12" fill="none" stroke="#111" className="h-3 w-[5px]"><path d="M5 0L1 12" /></svg>
          </button>
        ))}
      </div>
    </div>
  )
}

function CommandLine() {
  return (
    <section className="flex h-[41px] border-t border-[#777777] pt-[7px]">
      <div className="mr-[2px] ml-1 flex gap-[1px] py-[2px]">
        <div className="w-[2px] border-r border-[#b0b0b0] bg-white" />
        <div className="w-[2px] border-r border-[#b0b0b0] bg-white" />
      </div>
      <div className="flex flex-1 flex-col border border-[#707070] bg-white pl-[2px] font-['Liberation_Mono','Noto_Sans_CJK_SC',monospace] text-[10px] text-[#222222]">
        <p className="h-[18px] border-b border-[#a5a5a5] leading-[14px] whitespace-pre">
          <span className="text-[12px]">指定比例因子或</span> [<span className="text-[12px]">复制</span>(C)/
          <span className="text-[12px]">参照</span>(R)] &lt;1.0000&gt;:{'  '}0.5
        </p>
        <div className="flex items-center">
          <label htmlFor="command" className="text-[12px] leading-[14px]">命令:</label>
          <input id="command" className="h-[13px] flex-1 outline-none" />
        </div>
      </div>
      <div className="flex w-[38px] flex-col bg-white">
        <div className="flex h-[19px] items-center gap-[6px] pl-[3px]">
          <svg viewBox="0 0 12 14" fill="none" stroke="#d9534a" strokeWidth="1.300" className="h-[12px] w-[11px]">
            <circle cx="6" cy="4.500" r="3.300" />
            <path d="M1 13c0-4 2-5 5-5s5 1 5 5" />
          </svg>
          <svg viewBox="0 0 12 12" fill="none" stroke="#d9534a" strokeWidth="1.300" className="size-[12px]">
            <path d="M1 1h4v4H1zM7 1h4v4H7zM1 7h4v4H1zM7 7h4v4H7z" />
          </svg>
        </div>
        <div className="flex flex-1 items-center gap-[6px] bg-[#f0f0f0] pl-[10px]">
          <svg viewBox="0 0 8 8" fill="none" stroke="#333" strokeWidth="1.300" className="size-[7px]"><path d="M2 1l4 3-4 3" /></svg>
          <svg viewBox="0 0 8 8" fill="none" stroke="#333" strokeWidth="1.300" className="size-[6px] self-start"><path d="M1 2l3 4 3-4" /></svg>
        </div>
      </div>
    </section>
  )
}

function StatusBar() {
  return (
    <footer className="flex h-[19px] items-center pt-[2px] pl-[3px] font-['Liberation_Serif','Noto_Sans_CJK_SC',serif] text-[10px] leading-[14px] text-[#111111]">
      <output className="w-[151px] border border-[#c4c4c4] pl-px">491.8561, 122.6945, 0.0000</output>
      <div className="ml-[2px] flex gap-[1px]">
        {toggles.map(({ label, on, latin }) => (
          <button
            key={label}
            aria-pressed={on}
            className={`h-[14px] border px-px leading-[13px] whitespace-nowrap ${latin ? "font-['Liberation_Mono',monospace] text-[8px]" : 'text-[9px]'} ${on ? 'border-t-[#333333] border-r-white border-b-white border-l-[#333333]' : 'border-t-transparent border-r-[#9a9a9a] border-b-transparent border-l-transparent'}`}
          >
            {label}
          </button>
        ))}
      </div>
      <div className="ml-auto flex items-center gap-[2px] pr-[2px]">
        <svg viewBox="0 0 16 16" fill="none" className="size-[13px]">
          <path d="M1 1l9 9M6 1v10M2 6h10" stroke="#222" strokeWidth="1.500" />
          <path d="M10 6l5 9H5z" fill="#f3e24a" stroke="#8e8318" />
          <path d="M10 9v3" stroke="#111" strokeWidth="1.500" />
        </svg>
        <svg viewBox="0 0 16 16" fill="none" className="size-[13px]">
          <path d="M8 8V4c0-4 6-4 6 0v2" stroke="#6f6a18" strokeWidth="2" />
          <path d="M2 7h9v8H2z" fill="#c9ba2f" stroke="#4a4710" strokeWidth="1.300" />
        </svg>
        <svg viewBox="0 0 16 16" fill="none" className="size-[13px]">
          <path d="M2 2h5v11H2zM7 4h5" stroke="#4a7391" strokeWidth="2" fill={PALE} />
          <path d="M11 6l5 9H6z" fill="#f3e24a" stroke="#8e8318" />
          <path d="M11 9v3" stroke="#111" strokeWidth="1.500" />
        </svg>
        <svg viewBox="0 0 8 8" className="mx-[5px] size-[6px]"><path d="M0 2h8L4 7z" fill="#111" /></svg>
        <button aria-label="Clean screen" className="size-[12px] border border-[#315e87] bg-[#a9cdec]" />
      </div>
    </footer>
  )
}

export default function App() {
  return (
    <div className="relative flex min-h-screen flex-col overflow-hidden bg-[#f0f0f0]">
      <TitleBar />
      <MenuBar />
      <Toolbars />
      <main className="flex flex-1 items-stretch">
        <aside className="flex w-5 flex-col items-stretch">
          <div className="flex h-[319px] flex-col border-r border-b border-[#bdbdbd] bg-[#f6f6f6]">
            <SideGrip />
            <SideBar names={drawTools} />
            <div className="h-1" />
          </div>
        </aside>
        <section className="flex flex-1 flex-col">
          <div className="relative flex-1 overflow-hidden border-t border-[#555555] bg-black">
            <Drawing />
            <UcsIcon />
          </div>
          <LayoutTabs />
        </section>
        <aside className="flex w-[21px] flex-col border-l border-[#bdbdbd] pl-[2px]">
          <div className="flex h-[287px] flex-col border-b border-l border-[#bdbdbd] bg-[#f6f6f6]">
            <SideGrip />
            <SideBar names={modifyTools} />
            <div className="h-1" />
          </div>
          <div className="mt-[1px] flex h-[76px] flex-col border-b border-l border-[#bdbdbd] bg-[#f6f6f6]">
            <SideGrip />
            <SideBar names={orderTools} />
            <div className="h-1" />
          </div>
        </aside>
      </main>
      <CommandLine />
      <StatusBar />
      <div className="flex h-[5px] justify-end overflow-hidden bg-[#101014] pr-[30px]">
        <span className="font-['Noto_Sans','Noto_Sans_CJK_SC',sans-serif] text-[9px] leading-[12px] text-white">下午 08:18</span>
      </div>
      <div className="absolute top-0 right-[124px] h-[2px] w-[202px] bg-[#c9c9c9]" />
      <Brand />
      <div className="absolute right-0 bottom-5 h-[44px] w-[5px] rounded-l-sm border border-[#444444] bg-linear-to-b from-[#3b4652] via-[#43a3a0] to-[#c6b25e]" />
    </div>
  )
}
